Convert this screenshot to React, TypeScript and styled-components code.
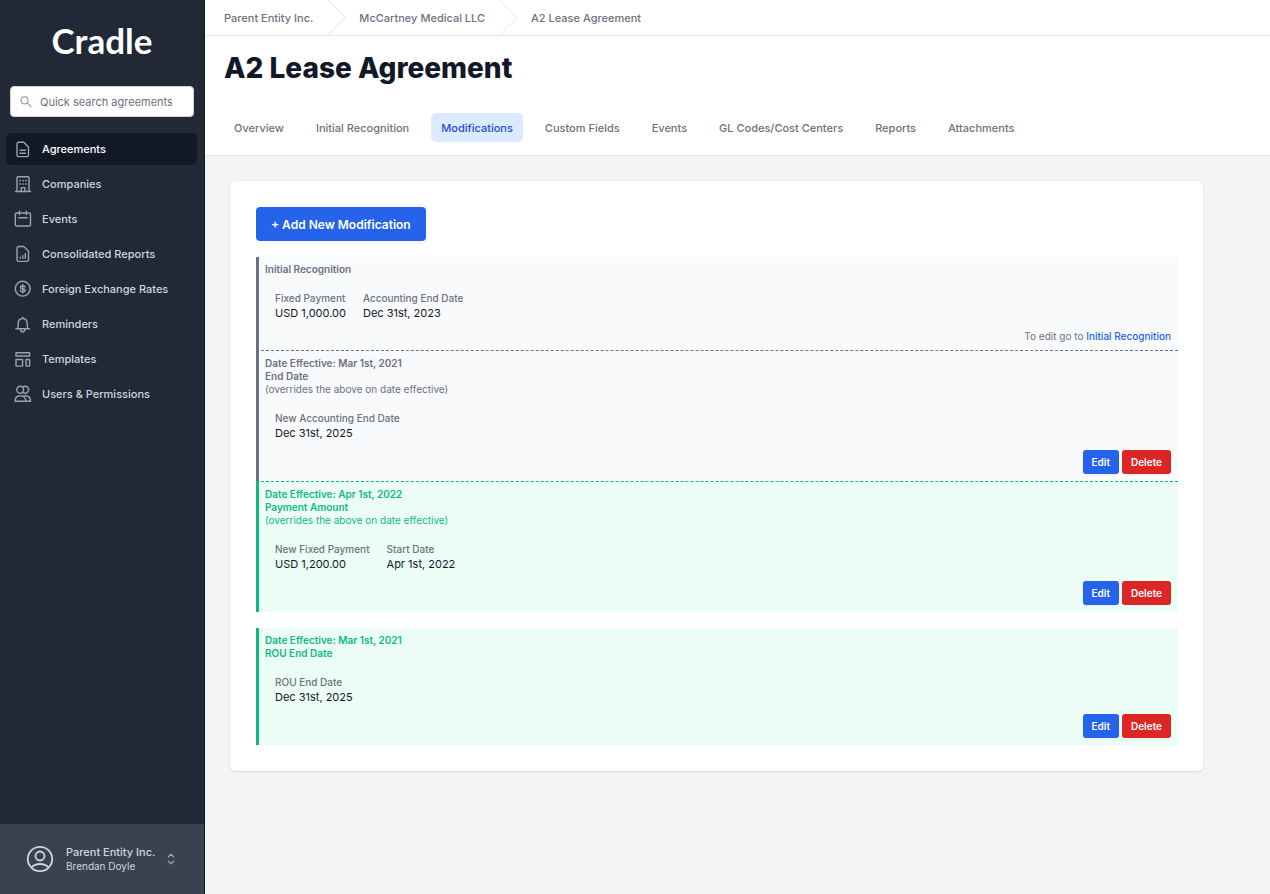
import React from "react";
import styled, { createGlobalStyle, css } from "styled-components";

const GlobalStyle = createGlobalStyle`
  *, *::before, *::after { box-sizing: border-box; }
  body {
    margin: 0;
    background: #f3f4f6;
    color: #111827;
    font-family: Inter, "Liberation Sans", sans-serif;
    font-size: 11px;
    line-height: 16px;
  }
  a { color: inherit; text-decoration: none; }
  button, input { font: inherit; margin: 0; }
  h1, h2, p, dl, dd, ul, ol { margin: 0; padding: 0; }
  ul, ol { list-style: none; }
`;

const Shell = styled.div`
  display: flex;
  min-height: 100vh;
`;

const Sidebar = styled.aside`
  display: flex;
  flex-direction: column;
  flex: 0 0 205px;
  min-width: 0;
  background: #212936;
  border-right: 1px solid #131827;
`;

const Logo = styled.a`
  padding: 20px 0 26px;
  color: #fff;
  font-family: Lato, sans-serif;
  font-size: 35px;
  font-weight: 700;
  line-height: 40px;
  text-align: center;
`;

const Search = styled.label`
  display: flex;
  align-items: center;
  gap: 8px;
  height: 31px;
  margin: 0 10px 16px;
  padding: 0 9px;
  background: #fff;
  border: 1px solid #d1d5db;
  border-radius: 4px;
  color: #9ca3af;
  svg { flex: none; }
`;

const SearchInput = styled.input`
  width: 100%;
  min-width: 0;
  padding: 0;
  border: 0;
  outline: 0;
  background: transparent;
  color: #111827;
  &::placeholder { color: #6b7280; opacity: 1; }
`;

const NavList = styled.ul`
  display: flex;
  flex: 1;
  flex-direction: column;
  gap: 3px;
  padding: 0 7px 0 6px;
`;

const NavLink = styled.a<{ $active?: boolean }>`
  display: flex;
  align-items: center;
  gap: 10px;
  height: 32px;
  padding: 0 8px;
  border-radius: 5px;
  font-weight: 500;
  color: ${(p) => (p.$active ? "#fff" : "#d1d5db")};
  background: ${(p) => (p.$active ? "#131827" : "transparent")};
  svg { color: #9ca3af; }
`;

const Account = styled.button`
  display: flex;
  align-items: center;
  gap: 12px;
  height: 70px;
  padding: 0 26px;
  border: 0;
  background: #3a4250;
  color: #d1d5db;
  text-align: left;
`;

const AccountText = styled.span`
  display: flex;
  flex-direction: column;
  padding-bottom: 2px;
`;

const AccountCompany = styled.span`
  font-weight: 500;
  line-height: 16px;
`;

const AccountUser = styled.span`
  font-size: 10px;
  line-height: 13px;
`;

const Main = styled.main`
  flex: 1;
  min-width: 0;
`;

const Crumbs = styled.ol`
  display: flex;
  height: 36px;
  padding: 0 19px;
  background: #fff;
  border-bottom: 1px solid #e5e7eb;
`;

const Crumb = styled.li`
  display: flex;
  align-items: center;
  color: #6b7280;
  font-weight: 500;
  svg { margin: 0 13px 0 14px; }
`;

const Header = styled.header`
  padding: 12px 19px 13px;
  background: #fff;
  border-bottom: 1px solid #e5e7eb;
`;

const Title = styled.h1`
  margin-bottom: 25px;
  font-size: 28px;
  font-weight: 800;
  line-height: 40px;
`;

const Tabs = styled.nav`
  display: flex;
  gap: 12px;
`;

const Tab = styled.a<{ $active?: boolean }>`
  padding: 1px 10px 0;
  border-radius: 5px;
  font-weight: 500;
  line-height: 28px;
  white-space: nowrap;
  color: ${(p) => (p.$active ? "#1d4ed8" : "#6b7280")};
  background: ${(p) => (p.$active ? "#dbeafe" : "transparent")};
`;

const Content = styled.div`
  max-width: 1024px;
  padding: 25px 26px 25px 25px;
`;

const Card = styled.section`
  padding: 26px 25px 26px 26px;
  background: #fff;
  border-radius: 5px;
  box-shadow: 0 1px 2px rgba(0, 0, 0, 0.1), 0 0 1px rgba(0, 0, 0, 0.12);
`;

const AddButton = styled.button`
  display: block;
  height: 34px;
  margin-bottom: 16px;
  padding: 1px 15px 0;
  border: 0;
  border-radius: 4px;
  background: #2563eb;
  color: #fff;
  font-size: 12px;
  font-weight: 600;
`;

const Group = styled.div`
  & + & { margin-top: 16px; }
`;

const tones = {
  past: css`
    --accent: #6b7280;
    --surface: #f9fafb;
  `,
  current: css`
    --accent: #10b981;
    --surface: #ecfdf5;
  `,
};

const Entry = styled.article<{ $tone: keyof typeof tones }>`
  ${(p) => tones[p.$tone]}
  padding: 6px 7px 7px 6px;
  border-left: 3px solid var(--accent);
  background: var(--surface);
  & + & { border-top: 1px dashed var(--accent); }
`;

const EntryHeading = styled.h2`
  color: var(--accent);
  font-size: 10px;
  font-weight: 600;
  line-height: 13px;
`;

const EntryNote = styled.p`
  color: var(--accent);
  font-size: 10px;
  line-height: 13px;
`;

const Fields = styled.dl`
  display: flex;
  gap: 17px;
  margin: 16px 10px 9px;
`;

const FieldLabel = styled.dt`
  color: #6b7280;
  font-size: 10px;
  font-weight: 500;
  line-height: 13px;
`;

const EntryFooter = styled.div`
  display: flex;
  justify-content: flex-end;
  gap: 3px;
`;

const EditHint = styled.p`
  color: #6b7280;
  font-size: 10px;
  line-height: 13px;
`;

const HintLink = styled.a`
  color: #2563eb;
  font-weight: 500;
`;

const SmallButton = styled.button<{ $danger?: boolean }>`
  height: 24px;
  padding: 0 9px;
  border: 0;
  border-radius: 3px;
  background: ${(p) => (p.$danger ? "#dc2626" : "#2563eb")};
  box-shadow: 0 1px 2px rgba(0, 0, 0, 0.05);
  color: #fff;
  font-size: 10px;
  font-weight: 600;
`;

const NavIcon = ({ children }: { children: React.ReactNode }) => (
  <svg width="18" height="18" viewBox="0 0 18 18" fill="none" stroke="currentColor" strokeWidth="1.4" strokeLinecap="round" strokeLinejoin="round" aria-hidden="true">
    {children}
  </svg>
);

const navItems = [
  {
    label: "Agreements",
    icon: (
      <>
        <path d="M4.600 2.200h5.200l4.700 4.700v8.100a1.600 1.600 0 0 1-1.600 1.600H4.600A1.600 1.600 0 0 1 3 15V3.800a1.600 1.600 0 0 1 1.600-1.600z" />
        <path d="M6 10.200h5.500M6 13.200h5.500" />
      </>
    ),
  },
  {
    label: "Companies",
    icon: (
      <>
        <path d="M1.500 16.500h15M3 16.500V2.800a1 1 0 0 1 1-1h10a1 1 0 0 1 1 1v13.700" />
        <path d="M7.200 16.500v-3.900h3.600v3.900" />
        <path d="M5.900 5.500h.5M8.800 5.500h.5M11.700 5.500h.5M5.900 9h.5M8.800 9h.5M11.700 9h.5" />
      </>
    ),
  },
  {
    label: "Events",
    icon: (
      <>
        <rect x="1.300" y="3" width="15.200" height="13" rx="1.600" />
        <path d="M5.500 1.300v3.200M12.300 1.300v3.200M4.800 7.700h8.200" />
      </>
    ),
  },
  {
    label: "Consolidated Reports",
    icon: (
      <>
        <path d="M4.600 1.500h5.200l4.700 4.700v8.600a1.600 1.600 0 0 1-1.600 1.600H4.600A1.600 1.600 0 0 1 3 14.800V3.100a1.600 1.600 0 0 1 1.600-1.600z" />
        <path d="M6.300 13.200v-1M8.800 13.200v-2.600M11.300 13.200V8.700" />
      </>
    ),
  },
  {
    label: "Foreign Exchange Rates",
    icon: (
      <>
        <circle cx="8.700" cy="8.700" r="7.400" />
        <path d="M11 7C10.700 6.200 9.900 5.700 8.700 5.700c-1.400 0-2.300.6-2.300 1.500 0 2.200 4.700.9 4.700 3.100 0 .9-1 1.500-2.400 1.500-1.300 0-2.200-.6-2.400-1.500M8.700 4.500v8.500" />
      </>
    ),
  },
  {
    label: "Reminders",
    icon: (
      <>
        <path d="M1.900 13.700h13.700M3.600 13.700c.5-1.200.6-2.700.6-4.900 0-3.200 1.700-5.300 4.500-5.300s4.500 2.100 4.500 5.300c0 2.200.1 3.700.7 4.900M8.700 3.500V2.300" />
        <path d="M6.500 13.900c0 1.900.8 2.900 2.200 2.900s2.200-1 2.200-2.900" />
      </>
    ),
  },
  {
    label: "Templates",
    icon: (
      <>
        <rect x="2" y="2.800" width="13.600" height="3.200" />
        <rect x="2" y="9.500" width="6.600" height="6.600" />
        <rect x="12" y="9.500" width="3.600" height="6.600" rx=".5" />
      </>
    ),
  },
  {
    label: "Users & Permissions",
    icon: (
      <>
        <ellipse cx="6.200" cy="4.800" rx="3.400" ry="3.500" />
        <path d="M8.700 2.300a3.400 3.500 0 1 1 0 5" />
        <path d="M1.100 16.300c0-3.500 2.200-5.600 5.200-5.600s5.500 2.100 5.500 5.600zM12 16.300h4.500c0-3.500-2-5.600-5-5.600-.9 0-1.600.1-2.300.5" />
      </>
    ),
  },
];

const tabs = ["Overview", "Initial Recognition", "Modifications", "Custom Fields", "Events", "GL Codes/Cost Centers", "Reports", "Attachments"];

const crumbs = ["Parent Entity Inc.", "McCartney Medical LLC", "A2 Lease Agreement"];

type EntryData = {
  tone: keyof typeof tones;
  headings: string[];
  overrides?: boolean;
  fields: [string, string][];
  locked?: boolean;
};

const groups: EntryData[][] = [
  [
    {
      tone: "past",
      headings: ["Initial Recognition"],
      fields: [["Fixed Payment", "USD 1,000.00"], ["Accounting End Date", "Dec 31st, 2023"]],
      locked: true,
    },
    {
      tone: "past",
      headings: ["Date Effective: Mar 1st, 2021", "End Date"],
      overrides: true,
      fields: [["New Accounting End Date", "Dec 31st, 2025"]],
    },
    {
      tone: "current",
      headings: ["Date Effective: Apr 1st, 2022", "Payment Amount"],
      overrides: true,
      fields: [["New Fixed Payment", "USD 1,200.00"], ["Start Date", "Apr 1st, 2022"]],
    },
  ],
  [
    {
      tone: "current",
      headings: ["Date Effective: Mar 1st, 2021", "ROU End Date"],
      fields: [["ROU End Date", "Dec 31st, 2025"]],
    },
  ],
];

const Modification = ({ entry }: { entry: EntryData }) => (
  <Entry $tone={entry.tone}>
    {entry.headings.map((heading) => (
      <EntryHeading key={heading}>{heading}</EntryHeading>
    ))}
    {entry.overrides && <EntryNote>(overrides the above on date effective)</EntryNote>}
    <Fields>
      {entry.fields.map(([label, value]) => (
        <div key={label}>
          <FieldLabel>{label}</FieldLabel>
          <dd>{value}</dd>
        </div>
      ))}
    </Fields>
    <EntryFooter>
      {entry.locked ? (
        <EditHint>
          To edit go to <HintLink href="#initial-recognition">Initial Recognition</HintLink>
        </EditHint>
      ) : (
        <>
          <SmallButton type="button">Edit</SmallButton>
          <SmallButton type="button" $danger>Delete</SmallButton>
        </>
      )}
    </EntryFooter>
  </Entry>
);

export default function App() {
  return (
    <>
      <GlobalStyle />
      <Shell>
        <Sidebar>
          <Logo href="#home">Cradle</Logo>
          <Search>
            <svg width="12" height="12" viewBox="0 0 12 12" fill="none" stroke="currentColor" strokeWidth="1.200" strokeLinecap="round" aria-hidden="true">
              <circle cx="4.600" cy="4.400" r="3.500" />
              <path d="M7.300 7l3.800 3.700" />
            </svg>
            <SearchInput type="search" placeholder="Quick search agreements" aria-label="Quick search agreements" />
          </Search>
          <NavList>
            {navItems.map((item, i) => (
              <li key={item.label}>
                <NavLink href="#nav" $active={i === 0}>
                  <NavIcon>{item.icon}</NavIcon>
                  {item.label}
                </NavLink>
              </li>
            ))}
          </NavList>
          <Account type="button">
            <svg width="28" height="28" viewBox="0 0 28 28" fill="none" stroke="currentColor" strokeWidth="1.800" aria-hidden="true">
              <circle cx="14" cy="14" r="12.200" />
              <circle cx="14" cy="11" r="4.500" />
              <path d="M5.300 22.500c2.200-2.400 5.200-3.500 8.700-3.500s6.500 1.100 8.700 3.500" />
            </svg>
            <AccountText>
              <AccountCompany>Parent Entity Inc.</AccountCompany>
              <AccountUser>Brendan Doyle</AccountUser>
            </AccountText>
            <svg width="8" height="12" viewBox="0 0 8 12" fill="none" stroke="#9ca3af" strokeWidth="1.300" strokeLinecap="round" strokeLinejoin="round" aria-hidden="true">
              <path d="M1.400 3.800L4 1.200l2.600 2.600M1.400 8.200L4 10.800l2.600-2.600" />
            </svg>
          </Account>
        </Sidebar>
        <Main>
          <nav aria-label="Breadcrumb">
            <Crumbs>
              {crumbs.map((crumb, i) => (
                <Crumb key={crumb}>
                  <a href="#crumb">{crumb}</a>
                  {i < crumbs.length - 1 && (
                    <svg width="19" height="35" viewBox="0 0 24 44" preserveAspectRatio="none" fill="#e5e7eb" aria-hidden="true">
                      <path d="M.293 0l22 22-22 22h1.414l22-22-22-22H.293z" />
                    </svg>
                  )}
                </Crumb>
              ))}
            </Crumbs>
          </nav>
          <Header>
            <Title>A2 Lease Agreement</Title>
            <Tabs aria-label="Agreement sections">
              {tabs.map((tab) => (
                <Tab key={tab} href="#tab" $active={tab === "Modifications"}>{tab}</Tab>
              ))}
            </Tabs>
          </Header>
          <Content>
            <Card>
              <AddButton type="button">+ Add New Modification</AddButton>
              {groups.map((group, i) => (
                <Group key={i}>
                  {group.map((entry) => (
                    <Modification key={entry.headings.join()} entry={entry} />
                  ))}
                </Group>
              ))}
            </Card>
          </Content>
        </Main>
      </Shell>
    </>
  );
}
